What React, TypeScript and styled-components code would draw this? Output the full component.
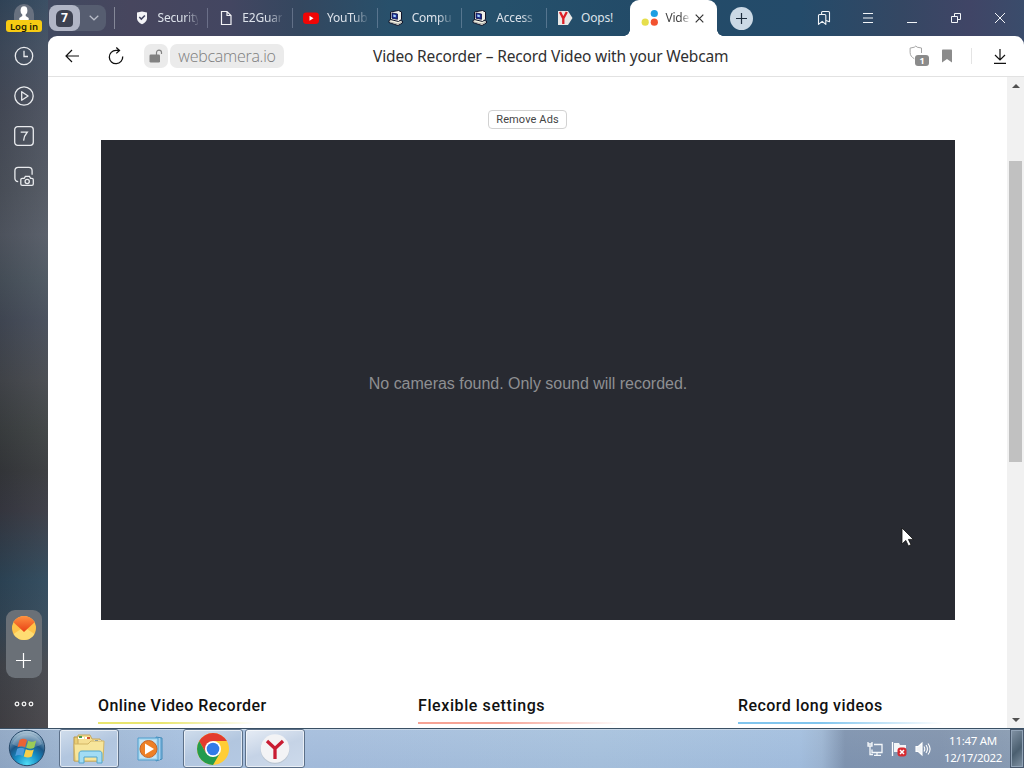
import React from 'react';
import styled, { createGlobalStyle, css } from 'styled-components';

const GlobalStyle = createGlobalStyle`
  * {
    box-sizing: border-box;
  }

  body {
    margin: 0;
    overflow: hidden;
    font-family: "Noto Sans", "Open Sans", sans-serif;
  }

  svg {
    display: block;
    flex: none;
  }
`;

const Desktop = styled.div`
  width: 1024px;
  height: 768px;
  display: flex;
  flex-direction: column;
  overflow: hidden;
`;

const Browser = styled.div`
  height: 728px;
  display: flex;
  background:
    linear-gradient(90deg, #3d4b61 0, #47465e 130px, #434661 230px, #34475f 300px, #28506b 390px, #25506b 500px, #234b68 640px, #244b6a 800px, #344763 900px, #404566 970px, #3a4c6b 1024px) 0 0 / 1024px 50px no-repeat,
    #42464d;
`;

const Sidebar = styled.aside`
  width: 48px;
  display: flex;
  flex-direction: column;
  align-items: center;
  padding-top: 4px;
  background:
    linear-gradient(90deg, rgba(20, 22, 28, 0.14), rgba(255, 255, 255, 0.04)),
    linear-gradient(180deg, #34495f 0, #414e60 45px, #494f5d 100px, #505660 190px, #555b66 235px, #4b555f 280px, #454c59 320px, #46494e 380px, #3d4142 430px, #37393c 470px, #393a43 510px, #2e485b 580px, #34495a 620px, #44474d 665px, #454347 728px);
`;

const Profile = styled.div`
  display: flex;
  flex-direction: column;
  align-items: center;
  height: 32px;
`;

const Avatar = styled.div`
  width: 20px;
  height: 16px;
  border-radius: 10px 10px 0 0;
  background: #68717f;
`;

const LoginBadge = styled.div`
  width: 36px;
  height: 12px;
  border-radius: 3px;
  background: #f7cb13;
  color: #241d05;
  font: 600 9.5px/13px "Noto Sans", sans-serif;
  text-align: center;
  white-space: nowrap;
`;

const SideButton = styled.div`
  width: 40px;
  height: 40px;
  display: flex;
  align-items: center;
  justify-content: center;
  color: #e9ebee;
`;

const AppsBox = styled.div`
  width: 36px;
  height: 68px;
  margin-top: auto;
  border-radius: 9px;
  background: #6a7077;
  display: flex;
  flex-direction: column;
  align-items: center;
  justify-content: space-between;
  padding: 6px 0 10px;
`;

const MoreButton = styled(SideButton)`
  height: 50px;
  padding-top: 2px;
`;

const Main = styled.div`
  width: 976px;
  display: flex;
  flex-direction: column;
`;

const TabStrip = styled.header`
  height: 36px;
  display: flex;
  align-items: center;
`;

const TabCounter = styled.div`
  width: 57px;
  height: 26px;
  margin: 0 8px 0 1px;
  border-radius: 8px;
  background: #565d70;
  display: flex;
  align-items: center;
`;

const CounterPill = styled.div`
  width: 31px;
  height: 26px;
  border-radius: 8px;
  background: #b1b5c5;
  display: flex;
  align-items: center;
  justify-content: center;
`;

const CounterNumber = styled.div`
  width: 17px;
  height: 17px;
  border-radius: 6px 6px 4px 4px;
  background: #3d4150;
  color: #fff;
  font: 700 12px/16px "Noto Sans", sans-serif;
  text-align: center;
`;

const Chevron = styled.div`
  flex: 1;
  display: flex;
  justify-content: center;
  padding-left: 2px;
`;

const StripDivider = styled.div`
  width: 1px;
  height: 22px;
  margin-right: 8.6px;
  background: #858898;
`;

const Tab = styled.div<{ $last?: boolean }>`
  width: ${p => (p.$last ? 83.4 : 84.7)}px;
  height: 20px;
  flex: none;
  display: flex;
  align-items: center;
  gap: 8px;
  padding-left: 10px;
  border-right: 1px solid ${p => (p.$last ? 'transparent' : 'rgba(190, 200, 220, 0.32)')};
`;

const TabTitle = styled.div<{ $width: number; $active?: boolean; $clear?: boolean }>`
  width: ${p => p.$width}px;
  overflow: hidden;
  white-space: nowrap;
  color: ${p => (p.$active ? '#444' : '#dce2ea')};
  font-size: 12px;
  line-height: 18px;
  letter-spacing: -0.2px;
  ${p => !p.$clear && css`
    mask-image: linear-gradient(90deg, #000 65%, rgba(0, 0, 0, 0.15) 100%);
  `}
`;

const ActiveTab = styled.div`
  position: relative;
  width: 87px;
  height: 36px;
  flex: none;
  display: flex;
  align-items: center;
  gap: 6px;
  padding-left: 11px;
  border-radius: 9px 9px 0 0;
  background: #fff;

  &::before,
  &::after {
    content: '';
    position: absolute;
    bottom: 0;
    width: 6px;
    height: 6px;
  }

  &::before {
    left: -6px;
    background: radial-gradient(circle at 0 0, transparent 5.5px, #fff 6px);
  }

  &::after {
    right: -6px;
    background: radial-gradient(circle at 100% 0, transparent 5.5px, #fff 6px);
  }
`;

const NewTab = styled.div`
  width: 23px;
  height: 23px;
  margin-left: 13px;
  border-radius: 50%;
  background: #cbd9e5;
  display: flex;
  align-items: center;
  justify-content: center;
`;

const WindowButtons = styled.div`
  margin-left: auto;
  display: flex;
  color: #f2f5f8;
  padding-right: 2px;
`;

const WindowButton = styled.div`
  width: 44px;
  height: 36px;
  display: flex;
  align-items: center;
  justify-content: center;
`;

const Toolbar = styled.div`
  height: 41px;
  display: flex;
  align-items: center;
  background: #fff;
  border-bottom: 1px solid #e2e2e2;
  border-radius: 9px 9px 0 0;
  padding-left: 2px;
`;

const ToolButton = styled.div`
  width: 44px;
  height: 40px;
  flex: none;
  display: flex;
  align-items: center;
  justify-content: center;
`;

const LockBox = styled.div`
  width: 24px;
  height: 24px;
  margin-left: 6px;
  border-radius: 7px;
  background: #ebebeb;
  display: flex;
  align-items: center;
  justify-content: center;
`;

const Address = styled.div`
  width: 114px;
  height: 24px;
  margin-left: 2px;
  border-radius: 7px;
  background: #ebebeb;
  color: #7d7d7d;
  font: 300 16px/25px "Open Sans", "Noto Sans", sans-serif;
  letter-spacing: -0.26px;
  text-align: center;
`;

const PageTitle = styled.div`
  width: 357px;
  margin-left: 89px;
  color: #303030;
  font: 400 15.5px/24px "Noto Sans", sans-serif;
  letter-spacing: -0.15px;
  white-space: nowrap;
`;

const ToolbarEnd = styled.div`
  margin-left: auto;
  display: flex;
  align-items: center;
  padding-right: 2px;
`;

const ProtectIcon = styled.div`
  position: relative;
  width: 20px;
  height: 22px;
  margin-right: 12px;
`;

const ProtectCount = styled.div`
  position: absolute;
  right: 0;
  bottom: 1px;
  width: 14px;
  height: 11px;
  border-radius: 3px;
  background: #8b8b8b;
  color: #fff;
  font: 700 9px/11px "Noto Sans", sans-serif;
  text-align: center;
`;

const ToolDivider = styled.div`
  width: 1px;
  height: 16px;
  margin: 0 6px 0 18px;
  background: #e4e4e4;
`;

const Viewport = styled.div`
  height: 651px;
  display: flex;
  background: #fff;
`;

const Page = styled.main`
  width: 959px;
  height: 651px;
  display: flex;
  flex-direction: column;
  overflow: hidden;
  padding-top: 33px;
`;

const RemoveAds = styled.button`
  width: 79px;
  height: 19px;
  margin: 0 0 11px 440px;
  padding: 0;
  flex: none;
  border: 1px solid #d2d2d2;
  border-radius: 4px;
  background: #fff;
  color: #444;
  font: 400 11px/16px "Roboto", sans-serif;
  letter-spacing: 0.12px;
`;

const VideoArea = styled.div`
  width: 854px;
  height: 480px;
  flex: none;
  margin-left: 53px;
  padding-top: 7px;
  background: #282a31;
  color: #8e8f92;
  display: flex;
  align-items: center;
  justify-content: center;
  font: 16px/20px "Liberation Sans", Arial, sans-serif;
  letter-spacing: -0.02px;
`;

const Features = styled.div`
  display: grid;
  grid-template-columns: repeat(3, 320px);
  margin: 74px 0 0 50px;
`;

const Feature = styled.section`
  padding-right: 100px;
`;

const FeatureTitle = styled.h3<{ $spacing: number }>`
  margin: 0;
  color: #111;
  font: 500 16px/24px "Roboto", sans-serif;
  letter-spacing: ${p => p.$spacing}px;
  white-space: nowrap;
`;

const FeatureLine = styled.div<{ $color: string; $width: number }>`
  width: ${p => p.$width}px;
  height: 2px;
  margin-top: 4px;
  background: linear-gradient(90deg, ${p => p.$color} 40%, transparent 100%);
`;

const Scrollbar = styled.div`
  width: 17px;
  display: flex;
  flex-direction: column;
  align-items: center;
  background: #f1f1f1;
`;

const ScrollArrow = styled.div<{ $up?: boolean }>`
  width: 17px;
  height: 17px;
  display: flex;
  align-items: center;
  justify-content: center;

  &::after {
    content: '';
    border: 4px solid transparent;
    border-top-width: ${p => (p.$up ? 0 : 4)}px;
    border-bottom-width: ${p => (p.$up ? 4 : 0)}px;
    border-top-color: #505050;
    border-bottom-color: #505050;
  }
`;

const ScrollThumb = styled.div`
  width: 13px;
  height: 301px;
  margin: 67px 0 auto;
  background: #c1c1c1;
`;

const Taskbar = styled.footer`
  height: 40px;
  display: flex;
  border-top: 1px solid #3a5064;
  box-shadow: inset 0 1px #c7d7e8;
  background:
    linear-gradient(180deg, rgba(255, 255, 255, 0.03), rgba(60, 90, 150, 0.05)),
    linear-gradient(90deg, #91a8c4 0, #9eb5d0 60px, #a8c1df 180px, #a7bfdd 320px, #a9c3de 600px, #a5c0df 800px, #9fb7d3 822px, #8195b0 845px, #8395ae 940px, #8b9db3 1010px);
`;

const StartButton = styled.div`
  width: 59px;
  padding: 0 0 0 8px;
`;

const Task = styled.div<{ $width: number; $open?: boolean; $active?: boolean }>`
  width: ${p => p.$width}px;
  height: 39px;
  margin-right: 2px;
  display: flex;
  align-items: center;
  justify-content: center;
  ${p => p.$open && css`
    border: 1px solid #5c7089;
    border-radius: 3px;
    box-shadow: inset 0 0 0 1px rgba(255, 255, 255, 0.6);
    background: ${p.$active
      ? 'linear-gradient(160deg, #e6ecf5, #c5d3e6 50%, #cddaeb)'
      : 'linear-gradient(160deg, #d0ddec, #b2c6df 50%, #b4c9e3)'};
  `}
`;

const Tray = styled.div`
  margin-left: auto;
  display: flex;
  align-items: center;
  gap: 8px;
`;

const Clock = styled.div`
  width: 66px;
  margin-left: 1px;
  color: #fff;
  font: 400 11.5px/17px "Noto Sans", sans-serif;
  letter-spacing: -0.3px;
  text-align: center;
  white-space: nowrap;
`;

const ShowDesktop = styled.div`
  width: 14px;
  height: 39px;
  margin-left: -4px;
  border: 1px solid #48586c;
  box-shadow: inset 0 0 0 1px #92a4b7;
  background: linear-gradient(135deg, #8394a6, #4b5f70 55%, #8293a4);
`;

const Cursor = styled.svg`
  position: absolute;
  left: 901px;
  top: 527px;
`;

const PcIcon = () => (
  <svg width="16" height="16" viewBox="0 0 16 16">
    <path d="m1 10.5 3-1.5 10.5 2v2l-4.5 2.5L1 12.5z" fill="#f4f2e2" stroke="#11152a" />
    <path d="m2 12 8 2 4-2" fill="none" stroke="#8b8e90" strokeWidth=".7" />
    <path d="m2.5 2 8-1.5L13.500 2v7.500L10.500 11.500 2.500 9.500z" fill="#eeeee8" stroke="#11152a" />
    <path d="m4 3 5.500 1v5.300L4 8.200z" fill="#182b92" stroke="#0c1044" strokeWidth=".8" />
    <path d="m5.300 4.600 2.500.5v2.200l-2.500-.5z" fill="#a8d2fa" />
  </svg>
);

const ShieldIcon = () => (
  <svg width="16" height="16" viewBox="0 0 16 16">
    <path d="M8 1.500 13 2.500v6c0 2.600-2.200 4.500-5 5.700-2.800-1.200-5-3.100-5-5.700v-6z" fill="#f4f4f7" />
    <path d="m5.300 7 2 2.100 3.600-3.700" fill="none" stroke="#434661" strokeWidth="1.5" />
  </svg>
);

const FileIcon = () => (
  <svg width="16" height="16" viewBox="0 0 16 16" fill="none" stroke="#f2f2f5" strokeWidth="1.2">
    <path d="M3.500 1.500H9l4 4v9H3.500zM9 1.500v4h4" />
  </svg>
);

const YoutubeIcon = () => (
  <svg width="16" height="16" viewBox="0 0 16 16">
    <rect x="0" y="2.500" width="16" height="11.500" rx="3.400" fill="#f00505" />
    <path d="m6.500 5.800 4 2.500-4 2.500z" fill="#fff" />
  </svg>
);

const YandexTabIcon = () => (
  <svg width="16" height="16" viewBox="0 0 16 16">
    <path d="M1 1h10l4.500 7L11 15H1z" fill="#e9e8e6" />
    <path d="m3 2 3.300 6.500V14M9.800 2 6.300 8.500" fill="none" stroke="#dc1f26" strokeWidth="2.300" />
  </svg>
);

const tabs = [
  { title: 'Security', icon: <ShieldIcon /> },
  { title: 'E2Guard', icon: <FileIcon /> },
  { title: 'YouTube', icon: <YoutubeIcon /> },
  { title: 'Compu', icon: <PcIcon /> },
  { title: 'Access', icon: <PcIcon /> },
  { title: 'Oops!', icon: <YandexTabIcon />, clear: true },
];

const features = [
  { title: 'Online Video Recorder', color: '#e9e66f', width: 158, spacing: 0.44 },
  { title: 'Flexible settings', color: '#f6a395', width: 205, spacing: 0.6 },
  { title: 'Record long videos', color: '#80c5ee', width: 205, spacing: 0.45 },
];

const BrowserSidebar = () => (
  <Sidebar>
    <Profile>
      <Avatar>
        <svg width="20" height="16" viewBox="0 0 20 16" fill="#fff">
          <ellipse cx="10" cy="6.500" rx="3.400" ry="4.300" />
          <path d="M8.300 9h3.400v3l3 2v2H5.300v-2l3-2z" />
        </svg>
      </Avatar>
      <LoginBadge>Log in</LoginBadge>
    </Profile>
    <SideButton>
      <svg width="20" height="20" viewBox="0 0 20 20" fill="none" stroke="currentColor" strokeWidth="1.3">
        <circle cx="10" cy="10" r="8.700" />
        <path d="M10 4.800v5.700h4" />
      </svg>
    </SideButton>
    <SideButton>
      <svg width="20" height="20" viewBox="0 0 20 20" fill="none" stroke="currentColor" strokeWidth="1.3">
        <circle cx="10" cy="10" r="9.200" />
        <path d="M7.700 5.700v8.600l6.400-4.300z" strokeLinejoin="round" />
      </svg>
    </SideButton>
    <SideButton>
      <svg width="20" height="20" viewBox="0 0 20 20" fill="none" stroke="currentColor" strokeWidth="1.3">
        <rect x=".7" y=".7" width="18.600" height="18.600" rx="3" />
        <path d="M6.700 6.200h6.500c-2 2.300-3.300 5-3.600 8.400" />
      </svg>
    </SideButton>
    <SideButton>
      <svg width="20" height="20" viewBox="0 0 20 20" fill="none" stroke="currentColor" strokeWidth="1.3">
        <path d="M4.200 15.700C2.400 15.500.9 14.200.9 12.300V4.700C.9 2.500 2.200 1.300 4.200 1.300h10.600c2 0 3.300 1.200 3.300 3.400v4" />
        <path d="M8.200 12.300h2l1.200-2h4l1.200 2h1.300c.9 0 1.400.5 1.400 1.400v4.200c0 .9-.5 1.400-1.400 1.400H8.200c-.9 0-1.400-.5-1.400-1.400v-4.200c0-.9.500-1.400 1.400-1.400z" />
        <circle cx="13.200" cy="15.500" r="2.100" />
      </svg>
    </SideButton>
    <AppsBox>
      <svg width="24" height="24" viewBox="0 0 24 24">
        <defs>
          <linearGradient id="mailTop" x1="0" y1="0" x2="0" y2="1">
            <stop stopColor="#ff9140" />
            <stop offset="1" stopColor="#e84115" />
          </linearGradient>
          <clipPath id="mailClip"><circle cx="12" cy="12" r="12" /></clipPath>
        </defs>
        <g clipPath="url(#mailClip)">
          <path d="M0 0h24v24H0z" fill="#ffc349" />
          <path d="m0 19 12-8 12 8v5H0z" fill="#ffdc72" />
          <path d="M0 0h24v5L12 16 0 5z" fill="url(#mailTop)" />
        </g>
      </svg>
      <svg width="16" height="15" viewBox="0 0 16 15" stroke="#fff" strokeWidth="1.2">
        <path d="M0 7.500h15M7.500 0v15" />
      </svg>
    </AppsBox>
    <MoreButton>
      <svg width="20" height="6" viewBox="0 0 20 6" fill="none" stroke="#f2f2f2" strokeWidth="1.3">
        <circle cx="3" cy="3" r="1.8" />
        <circle cx="10" cy="3" r="1.8" />
        <circle cx="17" cy="3" r="1.8" />
      </svg>
    </MoreButton>
  </Sidebar>
);

const Tabs = () => (
  <TabStrip>
    <TabCounter>
      <CounterPill><CounterNumber>7</CounterNumber></CounterPill>
      <Chevron>
        <svg width="10" height="6" viewBox="0 0 10 6" fill="none" stroke="#b9bdc9" strokeWidth="1.2"><path d="m.7.7 4.300 4.100L9.300.7" /></svg>
      </Chevron>
    </TabCounter>
    <StripDivider />
    {tabs.map((tab, i) => (
      <Tab key={tab.title} $last={i === tabs.length - 1}>
        {tab.icon}
        <TabTitle $width={40} $clear={tab.clear}>{tab.title}</TabTitle>
      </Tab>
    ))}
    <ActiveTab>
      <svg width="18" height="18" viewBox="0 0 18 18">
        <circle cx="13.300" cy="4.500" r="3.600" fill="#1c9ee2" />
        <circle cx="4.200" cy="13.200" r="3.600" fill="#e6df4c" />
        <circle cx="13.300" cy="13.200" r="3.600" fill="#f25230" />
      </svg>
      <TabTitle $width={24} $active>Video</TabTitle>
      <svg width="9" height="9" viewBox="0 0 9 9" stroke="#333" strokeWidth="1.2"><path d="m.7.7 7.600 7.600M8.300.7.7 8.300" /></svg>
    </ActiveTab>
    <NewTab>
      <svg width="11" height="11" viewBox="0 0 11 11" stroke="#1c2c3c" strokeWidth="1.2"><path d="M0 5.500h11M5.500 0v11" /></svg>
    </NewTab>
    <WindowButtons>
      <WindowButton>
        <svg width="14" height="16" viewBox="0 0 14 16" fill="none" stroke="currentColor" strokeWidth="1.1" strokeLinejoin="round">
          <path d="M1.500 5.500c0-.7.3-1 1-1h5.300c.7 0 1 .3 1 1v8.900l-3.600-3-3.700 3z" />
          <path d="M4.600 4.500v-2c0-.7.3-1 1-1h5.900c.7 0 1 .3 1 1v9.300l-3.500-1.300" />
        </svg>
      </WindowButton>
      <WindowButton>
        <svg width="10" height="10" viewBox="0 0 10 10" stroke="currentColor"><path d="M0 .5h10M0 5h10M0 9.500h10" /></svg>
      </WindowButton>
      <WindowButton>
        <svg width="10" height="10" viewBox="0 0 10 10" stroke="currentColor"><path d="M0 9.500h10" /></svg>
      </WindowButton>
      <WindowButton>
        <svg width="10" height="10" viewBox="0 0 10 10" fill="none" stroke="currentColor">
          <path d="M.5 3.500h6v6h-6zM3.500 3.500v-3h6v6h-3" />
        </svg>
      </WindowButton>
      <WindowButton>
        <svg width="10" height="10" viewBox="0 0 10 10" stroke="currentColor"><path d="m0 0 10 10M10 0 0 10" /></svg>
      </WindowButton>
    </WindowButtons>
  </TabStrip>
);

const AddressBar = () => (
  <Toolbar>
    <ToolButton>
      <svg width="14" height="14" viewBox="0 0 14 14" fill="none" stroke="#111" strokeWidth="1.2"><path d="M14 7H1M7 1 1 7l6 6" /></svg>
    </ToolButton>
    <ToolButton>
      <svg width="16" height="18" viewBox="0 0 16 18" fill="none" stroke="#111" strokeWidth="1.3">
        <path d="M14.700 9.500A6.700 6.700 0 1 1 8 3.300h3.500M8.300.6l3.200 2.800-3.200 3" />
      </svg>
    </ToolButton>
    <LockBox>
      <svg width="14" height="14" viewBox="0 0 14 14">
        <rect x=".5" y="5.500" width="10.500" height="8" rx="1.300" fill="#828282" />
        <path d="M7.500 6V3.600a2.500 2.500 0 0 1 5 0V5" fill="none" stroke="#828282" strokeWidth="1.2" />
      </svg>
    </LockBox>
    <Address>webcamera.io</Address>
    <PageTitle>Video Recorder – Record Video with your Webcam</PageTitle>
    <ToolbarEnd>
      <ProtectIcon>
        <svg width="14" height="15" viewBox="0 0 14 15" fill="none" stroke="#a5a5a5">
          <path d="m6.800 1 1.400 1.200 4.300.8v5M6.800 1 5.300 2.200 1.100 3.100v4.200c0 3 1.600 5 4.200 6.400" />
        </svg>
        <ProtectCount>1</ProtectCount>
      </ProtectIcon>
      <svg width="12" height="14" viewBox="0 0 12 14"><path d="M1 1.500C1 .8 1.400.4 2 .4h8c.6 0 1 .4 1 1.100v12L6 10l-5 3.500z" fill="#8b8b8b" /></svg>
      <ToolDivider />
      <ToolButton>
        <svg width="12" height="16" viewBox="0 0 12 16" fill="none" stroke="#111" strokeWidth="1.2">
          <path d="M6 1v11M1 7l5 5 5-5M0 15.300h12" />
        </svg>
      </ToolButton>
    </ToolbarEnd>
  </Toolbar>
);

const WebPage = () => (
  <Viewport>
    <Page>
      <RemoveAds>Remove Ads</RemoveAds>
      <VideoArea>No cameras found. Only sound will recorded.</VideoArea>
      <Features>
        {features.map(f => (
          <Feature key={f.title}>
            <FeatureTitle $spacing={f.spacing}>{f.title}</FeatureTitle>
            <FeatureLine $color={f.color} $width={f.width} />
          </Feature>
        ))}
      </Features>
    </Page>
    <Scrollbar>
      <ScrollArrow $up />
      <ScrollThumb />
      <ScrollArrow />
    </Scrollbar>
  </Viewport>
);

const SystemTaskbar = () => (
  <Taskbar>
    <StartButton>
      <svg width="38" height="38" viewBox="0 0 38 38">
        <defs>
          <radialGradient id="orb" cx=".5" cy=".95" r=".9">
            <stop stopColor="#50dcf5" />
            <stop offset=".38" stopColor="#168cc4" />
            <stop offset=".65" stopColor="#1b5686" />
            <stop offset="1" stopColor="#a5bfd2" />
          </radialGradient>
        </defs>
        <circle cx="19" cy="19" r="17.700" fill="url(#orb)" stroke="#27496a" />
        <path d="M4 15a16 16 0 0 1 30 0c-8 5-21 5-30 0z" fill="#fff" opacity=".2" />
        <path d="M11.500 11c3-1.800 5-1.500 7.500 0l-2 7.300c-2.700-1.400-4.700-1.300-7.500 0z" fill="#eb6335" />
        <path d="M20.200 11.700c3 1.500 5.200 1.200 8-.3l-2 7.300c-2.700 1.400-5.200 1.400-8 0z" fill="#9ccb57" />
        <path d="M9.200 19.700c2.700-1.400 4.900-1.200 7.500.1l-2 7.300c-2.500-1.400-4.800-1.400-7.500 0z" fill="#4e9bda" />
        <path d="M17.800 20.200c2.700 1.400 5.300 1.400 8 .2l-2 7.200c-2.900 1.400-5.500 1.200-8-.2z" fill="#f8cf49" />
      </svg>
    </StartButton>
    <Task $width={60} $open>
      <svg width="36" height="32" viewBox="0 0 36 32">
        <path d="M3 4h9l2 3h16v21H3z" fill="#e9cd73" stroke="#b6954a" />
        <path d="M7 2h12l2 4h8v21H7z" fill="#f5df93" stroke="#c8a75a" />
        <path d="M7 5h6M14 5h5M23 8h7" stroke="#fff" strokeWidth="2" />
        <path d="M8 4h3" stroke="#4c9c4c" strokeWidth="2" />
        <path d="M16 5h3" stroke="#d15434" strokeWidth="2" />
        <path d="M24 8h3" stroke="#528ad0" strokeWidth="2" />
        <path d="M3 11h14l3-3h13l-1 20H4z" fill="#f7e59b" stroke="#d2b564" />
        <path d="M8 30V21c0-2 1-3 3-3h17c2 0 3 1 3 3v9h-5v-6H13v6z" fill="#a2dcf4" stroke="#51a5cd" />
      </svg>
    </Task>
    <Task $width={60}>
      <svg width="28" height="28" viewBox="0 0 28 28">
        <path d="m19 2 6 1v21l-6 2z" fill="#7bb4dc" stroke="#438cba" />
        <path d="M22 3v22" stroke="#d7edf9" />
        <path d="M1 3h20v22H1z" fill="#addaf1" stroke="#4e9dcc" />
        <path d="M3 5h16v18H3z" fill="#c6e5f5" />
        <circle cx="11.500" cy="14" r="8.500" fill="#ee8026" stroke="#c2662d" />
        <path d="m8 8.500 9 5.500-9 5.500z" fill="#fff" />
      </svg>
    </Task>
    <Task $width={60} $open>
      <svg width="32" height="32" viewBox="0 0 32 32">
        <circle cx="16" cy="16" r="16" fill="#ffcd35" />
        <path d="M16 16V8h13.900A16 16 0 0 0 2.200 8L9 20z" fill="#e33b2e" />
        <path d="M2.200 8A16 16 0 0 0 16 32l7-12-7 4-7-4z" fill="#249b4d" />
        <circle cx="16" cy="16" r="8" fill="#fff" />
        <circle cx="16" cy="16" r="6.300" fill="#327be8" />
      </svg>
    </Task>
    <Task $width={60} $open $active>
      <svg width="30" height="30" viewBox="0 0 30 30">
        <circle cx="15" cy="15.500" r="14.500" fill="#bcc7d3" />
        <circle cx="15" cy="14.500" r="14.300" fill="#f3f3f5" />
        <path d="m7 7 8 7.500L23 7M15 14v11" fill="none" stroke="#c91c32" strokeWidth="3.300" />
      </svg>
    </Task>
    <Tray>
      <svg width="16" height="16" viewBox="0 0 16 16" fill="none" stroke="#f4f7fa" strokeWidth="1.3">
        <path d="M7 3.500h8v8H5v-3M10 11.500V14M7 14.300h7" />
        <path d="M1 1v4h4V1M3 5v8.500h3M1 3h4" />
      </svg>
      <svg width="16" height="16" viewBox="0 0 16 16">
        <path d="M1.500 1v14" stroke="#fff" strokeWidth="1.3" />
        <path d="M3 2h5l1 2h6v7H3z" fill="#f3f5f7" />
        <rect x="6.500" y="6.500" width="9" height="9" rx="3" fill="#d72b31" />
        <path d="m9 9 4 4m0-4-4 4" stroke="#fff" strokeWidth="1.5" />
      </svg>
      <svg width="16" height="16" viewBox="0 0 16 16" fill="none" stroke="#fff" strokeWidth="1.1">
        <path d="M1 5.500h2.300L7 2v12l-3.700-3.500H1z" fill="#eef2f6" />
        <path d="M9 5.500c1 1.600 1 3.400 0 5M11 4c1.800 2.500 1.800 5.500 0 8M13 2.500c2.600 3.400 2.600 7.600 0 11" />
      </svg>
      <Clock>
        <div>11:47 AM</div>
        <div>12/17/2022</div>
      </Clock>
      <ShowDesktop />
    </Tray>
  </Taskbar>
);

export default function App() {
  return (
    <Desktop>
      <GlobalStyle />
      <Browser>
        <BrowserSidebar />
        <Main>
          <Tabs />
          <AddressBar />
          <WebPage />
        </Main>
      </Browser>
      <SystemTaskbar />
      <Cursor width="14" height="20" viewBox="0 0 14 20">
        <path d="M1 1v16l3.800-3.600 2.600 5.500 2.600-1.200-2.600-5.300h5z" fill="#fff" stroke="#111" strokeWidth=".8" />
      </Cursor>
    </Desktop>
  );
}
